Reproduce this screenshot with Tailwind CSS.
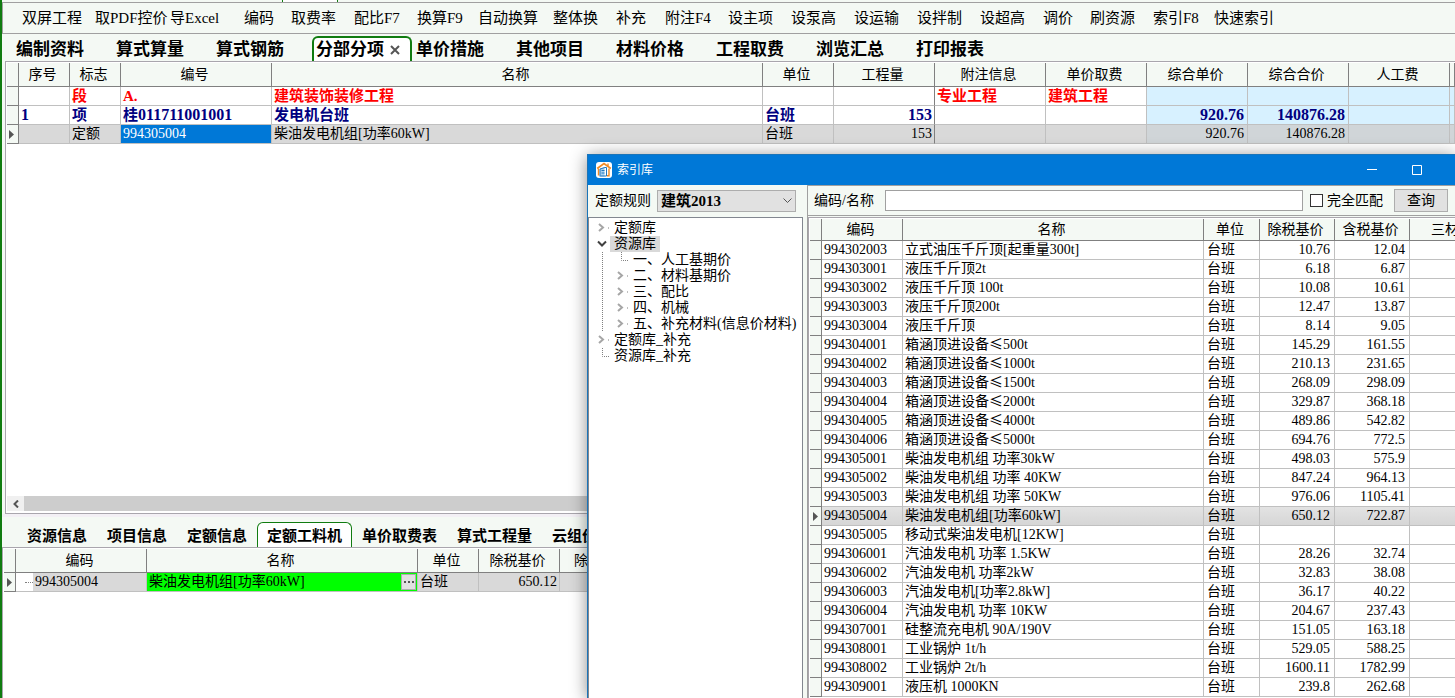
<!DOCTYPE html>
<html lang="zh-CN">
<head>
<meta charset="utf-8">
<title>索引库</title>
<script src="https://cdn.jsdelivr.net/npm/@tailwindcss/browser@4"></script>
</head>
<body class="relative flex h-screen overflow-hidden bg-white font-['Liberation_Serif','Noto_Sans_CJK_SC',serif] text-[14px] leading-[18px] text-black">

<div class="w-0.5 shrink-0 bg-[#107c10]"></div>

<main class="flex min-w-0 flex-1 flex-col">
  <div class="flex h-0.5 shrink-0 bg-[#f4f9f4] pl-[280px]"><div class="w-14 border-x border-[#107c10] bg-white"></div></div>
  <nav id="tools" aria-label="工具栏" class="flex h-8 shrink-0 items-center border-y border-l border-[#a0a0a0] bg-[#f4f9f4] pl-[19px] text-[15px] whitespace-nowrap"></nav>

  <nav aria-label="主选项卡" class="flex h-[27px] shrink-0 items-end bg-[#f4f9f4] pl-[10px] text-[17px] font-bold whitespace-nowrap">
    <button class="h-[25px] w-[100px] pt-0.5 pl-1 text-left">编制资料</button>
    <button class="h-[25px] w-[100px] pt-0.5 pl-1 text-left">算式算量</button>
    <button class="h-[25px] w-[100px] pt-0.5 pl-1 text-left">算式钢筋</button>
    <button class="flex h-[25px] w-[100px] items-center gap-1.5 rounded-t-md border-x-2 border-t-2 border-[#107c10] bg-white pl-0.5 text-left">分部分项
      <svg class="size-[10px]" viewBox="0 0 10 10" stroke="#555" stroke-width="2"><path d="M1 1l8 8M9 1l-8 8"/></svg>
    </button>
    <button class="h-[25px] w-[100px] pt-0.5 pl-1 text-left">单价措施</button>
    <button class="h-[25px] w-[100px] pt-0.5 pl-1 text-left">其他项目</button>
    <button class="h-[25px] w-[100px] pt-0.5 pl-1 text-left">材料价格</button>
    <button class="h-[25px] w-[100px] pt-0.5 pl-1 text-left">工程取费</button>
    <button class="h-[25px] w-[100px] pt-0.5 pl-1 text-left">浏览汇总</button>
    <button class="h-[25px] w-[100px] pt-0.5 pl-1 text-left">打印报表</button>
  </nav>

  <div class="flex min-h-0 flex-1 bg-[#f4f9f4] pl-[3px]">
    <section class="flex min-w-0 flex-1 flex-col border-y border-l border-[#a9a6ad] bg-white pt-px pl-px">
      <table class="w-full table-fixed border-separate border-spacing-0 whitespace-nowrap">
        <colgroup><col class="w-[12px]"><col class="w-[51px]"><col class="w-[51px]"><col class="w-[151px]"><col><col class="w-[71px]"><col class="w-[101px]"><col class="w-[111px]"><col class="w-[101px]"><col class="w-[101px]"><col class="w-[101px]"><col class="w-[101px]"><col class="w-[5px]"></colgroup>
        <thead>
          <tr class="h-[24px] bg-[#f4f9f4] *:border-r *:border-b *:border-[#808080] *:p-0 *:pr-[3px] *:font-normal">
            <th></th><th>序号</th><th>标志</th><th>编号</th><th>名称</th><th>单位</th><th>工程量</th><th>附注信息</th><th>单价取费</th><th>综合单价</th><th>综合合价</th><th>人工费</th><th></th>
          </tr>
        </thead>
        <tbody class="*:h-[19px]">
          <tr class="text-[15px] font-bold text-[#ff0000] *:border-r *:border-b *:border-[#c0c0c0] *:p-0 *:pl-0.5">
            <td class="border-[#808080]! bg-[#f4f9f4]"></td><td></td><td>段</td><td>A.</td><td>建筑装饰装修工程</td><td></td><td class="border-r-[#808080]!"></td><td>专业工程</td><td>建筑工程</td><td class="bg-[#d7f1ff]"></td><td class="bg-[#d7f1ff]"></td><td class="bg-[#d7f1ff]"></td><td class="bg-[#d7f1ff]"></td>
          </tr>
          <tr class="text-[15px] font-bold text-[#000080] *:border-r *:border-b *:border-[#c0c0c0] *:p-0 *:pl-0.5">
            <td class="border-[#808080]! bg-[#f4f9f4]"></td><td class="text-[16px]">1</td><td>项</td><td>桂<span class="text-[16px]">011711001001</span></td><td>发电机台班</td><td>台班</td><td class="border-r-[#808080]! pr-0.5! text-right text-[16px]">153</td><td></td><td></td><td class="bg-[#d7f1ff] pr-[3px]! text-right text-[16px]">920.76</td><td class="bg-[#d7f1ff] pr-[3px]! text-right text-[16px]">140876.28</td><td class="bg-[#d7f1ff]"></td><td class="bg-[#d7f1ff]"></td>
          </tr>
          <tr class="bg-[#d9d9d9] *:border-r *:border-b *:border-[#c0c0c0] *:p-0 *:pl-0.5">
            <td class="border-[#808080]! bg-[#f4f9f4]"><svg class="block h-[9px] w-[6px]" viewBox="0 0 6 9"><path d="M0 0l5 4.500-5 4.500z" fill="#555"/></svg></td><td></td><td>定额</td><td class="bg-[#0078d7] text-white">994305004</td><td>柴油发电机组[功率60kW]</td><td>台班</td><td class="border-r-[#808080]! pr-0.5! text-right">153</td><td></td><td></td><td class="bg-[#d0d5d8] pr-[3px]! text-right">920.76</td><td class="bg-[#d0d5d8] pr-[3px]! text-right">140876.28</td><td class="bg-[#d0d5d8]"></td><td class="bg-[#d0d5d8]"></td>
          </tr>
        </tbody>
      </table>
      <div class="flex-1"></div>
      <div class="mb-0.5 flex h-[15px] shrink-0 bg-[#cdcdcd]">
        <button aria-label="向左滚动" class="flex w-[17px] items-center justify-center bg-[#f0f0f0]"><svg class="h-[8px] w-[6px]" viewBox="0 0 6 8" fill="none" stroke="#555" stroke-width="2"><path d="M5 .5L1.500 4 5 7.500"/></svg></button>
      </div>
    </section>
  </div>

  <section class="flex h-[184px] shrink-0 flex-col">
    <div class="h-[3px] bg-[#f3f0f5]"></div>
    <nav aria-label="明细选项卡" class="flex h-[30px] shrink-0 items-end bg-[#f4f9f4] pl-[15px] text-[15px] font-bold whitespace-nowrap">
      <button class="h-[25px] px-[10px] pt-0.5">资源信息</button>
      <button class="h-[25px] px-[10px] pt-0.5">项目信息</button>
      <button class="h-[25px] px-[10px] pt-0.5">定额信息</button>
      <button class="h-[25px] rounded-t-md border-x border-t border-[#107c10] bg-white px-[9px] pt-px">定额工料机</button>
      <button class="h-[25px] px-[10px] pt-0.5">单价取费表</button>
      <button class="h-[25px] px-[10px] pt-0.5">算式工程量</button>
      <button class="h-[25px] px-[10px] pt-0.5">云组价</button>
    </nav>
    <div class="flex-1 border-t border-l border-[#a9a6ad] pt-px pl-px">
      <table class="w-[644px] table-fixed border-separate border-spacing-0 whitespace-nowrap">
        <colgroup><col class="w-[12px]"><col class="w-[131px]"><col class="w-[271px]"><col class="w-[61px]"><col class="w-[81px]"><col class="w-[88px]"></colgroup>
        <thead>
          <tr class="h-[24px] bg-[#f4f9f4] *:border-r *:border-b *:border-[#808080] *:p-0 *:pr-[3px] *:font-normal"><th></th><th>编码</th><th>名称</th><th>单位</th><th>除税基价</th><th>除税合价</th></tr>
        </thead>
        <tbody>
          <tr class="h-[19px] bg-[#d9d9d9] *:border-r *:border-b *:border-[#c0c0c0] *:p-0 *:pl-0.5">
            <td class="border-[#808080]! bg-[#f4f9f4]"><svg class="ml-px block h-[9px] w-[6px]" viewBox="0 0 6 9"><path d="M0 0l5 4.500-5 4.500z" fill="#555"/></svg></td>
            <td class="pl-0!"><div class="flex"><div class="flex w-[17px] items-center bg-white pl-[9px]"><div class="w-[8px] border-t border-dotted border-[#808080]"></div></div><div class="pl-0.5">994305004</div></div></td>
            <td class="bg-[#00ff00]"><div class="flex items-center justify-between pr-px">柴油发电机组[功率60kW]<button aria-label="选择" class="flex h-4 w-[15px] items-center justify-center gap-0.5 border border-[#adadad] bg-[#e1e1e1]"><i class="size-0.5 bg-[#555]"></i><i class="size-0.5 bg-[#555]"></i><i class="size-0.5 bg-[#555]"></i></button></div></td>
            <td>台班</td><td class="pr-0.5! text-right">650.12</td><td></td>
          </tr>
        </tbody>
      </table>
    </div>
  </section>
</main>

<!-- 索引库 window, floating above the main view -->
<div role="dialog" aria-label="索引库" class="absolute top-[154px] right-0 bottom-0 left-[587px] flex flex-col border-t border-l border-[#1b74b8] bg-[#f4f9f4] shadow-[0_2px_16px_rgba(0,0,0,0.45)]">
  <header class="flex h-[30px] shrink-0 items-center bg-[#0078d7] pr-[33px] pl-2 text-[12px] text-white">
    <svg class="mr-[5px] size-4" viewBox="0 0 16 16"><rect width="16" height="16" rx="3" fill="#fff"/><path d="M1.200 6.500L8 1.500l6.800 5" fill="none" stroke="#f08a24" stroke-width="1.600"/><path d="M12 1.500v3M2.500 6.500v7M13 6.500v7.200h-2" fill="none" stroke="#f08a24" stroke-width="1.400"/><path d="M4 6.500l4.500-1.500v9.500H4z" fill="#a9d3f2"/><path d="M4 14.500V7l5-1.500h1.500V14H4.500M5.500 8.500h3M5.500 11h3" fill="none" stroke="#2277bd"/></svg>
    <span class="flex-1">索引库</span>
    <button aria-label="最小化" class="mr-[35px]"><svg class="size-[10px]" viewBox="0 0 10 10"><path d="M0 4.500h10" stroke="#fff"/></svg></button>
    <button aria-label="最大化"><svg class="size-[10px]" viewBox="0 0 10 10"><path d="M.5.5h9v9h-9z" fill="none" stroke="#fff"/></svg></button>
  </header>
  <div class="flex min-h-0 flex-1">
    <aside class="mr-1 flex w-[215px] shrink-0 flex-col">
      <div class="flex h-[32px] shrink-0 items-center pr-[7px] pb-px pl-[7px]">
        <label for="rule" class="mr-[6px]">定额规则</label>
        <div class="relative flex-1">
          <select id="rule" class="block h-[22px] w-full appearance-none border border-[#adadad] bg-[#e1e1e1] pl-[3px] text-[15px] leading-[18px] font-bold"><option>建筑2013</option></select>
          <svg class="pointer-events-none absolute top-[8px] right-[4px] h-[6px] w-[9px]" viewBox="0 0 9 6" fill="none" stroke="#555"><path d="M.5.5l4 4 4-4"/></svg>
        </div>
      </div>
      <ul id="tree" class="flex-1 overflow-hidden border-x border-t border-[#828790] bg-white pt-0.5 leading-4 whitespace-nowrap"></ul>
    </aside>
    <div class="flex min-w-0 flex-1 flex-col border-l border-[#a0a0a0]">
      <form class="flex h-[31px] shrink-0 items-center border-y border-[#a0a0a0] pr-[7px] pl-[6px] whitespace-nowrap">
        <label for="kw" class="w-[71px]">编码/名称</label>
        <input id="kw" type="text" class="h-[21px] min-w-0 flex-1 border border-[#a0a0a0] bg-white px-1">
        <label class="ml-[7px] flex items-center gap-1"><input type="checkbox" class="size-[13px] appearance-none border border-[#333] bg-white">完全匹配</label>
        <button type="button" class="ml-[11px] h-[23px] w-[54px] border border-[#adadad] bg-[#e1e1e1]">查询</button>
      </form>
      <div class="mt-px min-h-0 flex-1 overflow-hidden border-t border-l border-[#a9a6ad] bg-white pt-px pl-px">
        <table class="w-full table-fixed border-separate border-spacing-0 whitespace-nowrap">
          <colgroup><col class="w-[12px]"><col class="w-[81px]"><col><col class="w-[56px]"><col class="w-[75px]"><col class="w-[75px]"><col class="w-[45px]"></colgroup>
          <thead><tr class="h-[22px] bg-[#f4f9f4] *:border-r *:border-b *:border-[#808080] *:p-0 *:pr-[3px] *:font-normal"><th></th><th>编码</th><th>名称</th><th>单位</th><th>除税基价</th><th>含税基价</th><th class="overflow-hidden border-r-0! pl-[21px]! text-left">三材</th></tr></thead>
          <tbody id="rows"></tbody>
        </table>
      </div>
    </div>
  </div>
</div>

<script>
const tools = [['双屏工程','w-[73px]'],['取PDF控价','w-[75px]'],['导Excel','w-[74px]'],['编码','w-[47px]'],['取费率','w-[63px]'],['配比F7','w-[63px]'],['换算F9','w-[61px]'],['自动换算','w-[75px]'],['整体换','w-[63px]'],['补充','w-[49px]'],['附注F4','w-[63px]'],['设主项','w-[63px]'],['设泵高','w-[63px]'],['设运输','w-[63px]'],['设拌制','w-[63px]'],['设超高','w-[63px]'],['调价','w-[47px]'],['刷资源','w-[63px]'],['索引F8','w-[61px]'],['快速索引','w-[75px]']];
document.getElementById('tools').innerHTML = tools.map(([t, w]) => `<button class="${w} shrink-0 text-left">${t}</button>`).join('');

const chev = x => `<path d="M${x} 4l4 3.500-4 3.500" fill="none" stroke="#a6a6a6" stroke-width="2"/><path d="M${x + 9} 8h1" stroke="#808080"/>`;
const dots = d => `<path d="${d}" fill="none" stroke="#808080" stroke-dasharray="1 1"/>`;
const svg = (w, body) => `<svg class="h-4 shrink-0" width="${w}" height="16" viewBox="0 0 ${w} 16">${body}</svg>`;
const tree = [
  [21, chev(10), '定额库'],
  [21, '<path d="M9 5.500l4 4 4-4" fill="none" stroke="#404040" stroke-width="2"/>', '资源库', true],
  [40, dots('M13.500 0v16M32.500 0v8.500h8'), '一、人工基期价'],
  [40, dots('M13.500 0v16') + chev(29), '二、材料基期价'],
  [40, dots('M13.500 0v16') + chev(29), '三、配比'],
  [40, dots('M13.500 0v16') + chev(29), '四、机械'],
  [40, dots('M13.500 0v16') + chev(29), '五、补充材料(信息价材料)'],
  [21, chev(10), '定额库_补充'],
  [21, dots('M13.500 0v8.500h8'), '资源库_补充'],
];
document.getElementById('tree').innerHTML = tree.map(([w, b, t, sel]) =>
  `<li class="flex h-4">${svg(w, b)}<span class="px-1 ${sel ? 'bg-[#d9d9d9]' : ''}">${t}</span></li>`).join('');

const rows = `994302003|立式油压千斤顶[起重量300t]|10.76|12.04
994303001|液压千斤顶2t|6.18|6.87
994303002|液压千斤顶 100t|10.08|10.61
994303003|液压千斤顶200t|12.47|13.87
994303004|液压千斤顶|8.14|9.05
994304001|箱涵顶进设备≤500t|145.29|161.55
994304002|箱涵顶进设备≤1000t|210.13|231.65
994304003|箱涵顶进设备≤1500t|268.09|298.09
994304004|箱涵顶进设备≤2000t|329.87|368.18
994304005|箱涵顶进设备≤4000t|489.86|542.82
994304006|箱涵顶进设备≤5000t|694.76|772.5
994305001|柴油发电机组 功率30kW|498.03|575.9
994305002|柴油发电机组 功率 40KW|847.24|964.13
994305003|柴油发电机组 功率 50KW|976.06|1105.41
994305004|柴油发电机组[功率60kW]|650.12|722.87
994305005|移动式柴油发电机[12KW]||
994306001|汽油发电机 功率 1.5KW|28.26|32.74
994306002|汽油发电机 功率2kW|32.83|38.08
994306003|汽油发电机[功率2.8kW]|36.17|40.22
994306004|汽油发电机 功率 10KW|204.67|237.43
994307001|硅整流充电机 90A/190V|151.05|163.18
994308001|工业锅炉 1t/h|529.05|588.25
994308002|工业锅炉 2t/h|1600.11|1782.99
994309001|液压机 1000KN|239.8|262.68`.split('\n').map(r => r.split('|'));
document.getElementById('rows').innerHTML = rows.map(([c, n, a, b]) => {
  const sel = c === '994305004';
  const name = n.replace('≤', '<span class="leading-[10px] font-[Noto_Sans_CJK_SC]">≤</span>');
  const mark = sel ? '<svg class="ml-[3px] block h-[9px] w-[6px]" viewBox="0 0 6 9"><path d="M0 0l5 4.500-5 4.500z" fill="#555"/></svg>' : '';
  return `<tr class="h-[19px] *:h-[19px] *:border-r *:border-b *:border-[#c0c0c0] *:p-0 ${sel ? 'bg-linear-to-b from-[#e3e3e3] to-[#d5d5d5]' : ''}"><td class="border-[#808080]! bg-[#f4f9f4]">${mark}</td><td class="pl-0.5!">${c}</td><td class="pl-0.5!">${name}</td><td class="pl-[3px]!">台班</td><td class="pr-1! text-right">${a}</td><td class="pr-1! text-right">${b}</td><td class="border-r-0!"></td></tr>`;
}).join('');
</script>
</body>
</html>
